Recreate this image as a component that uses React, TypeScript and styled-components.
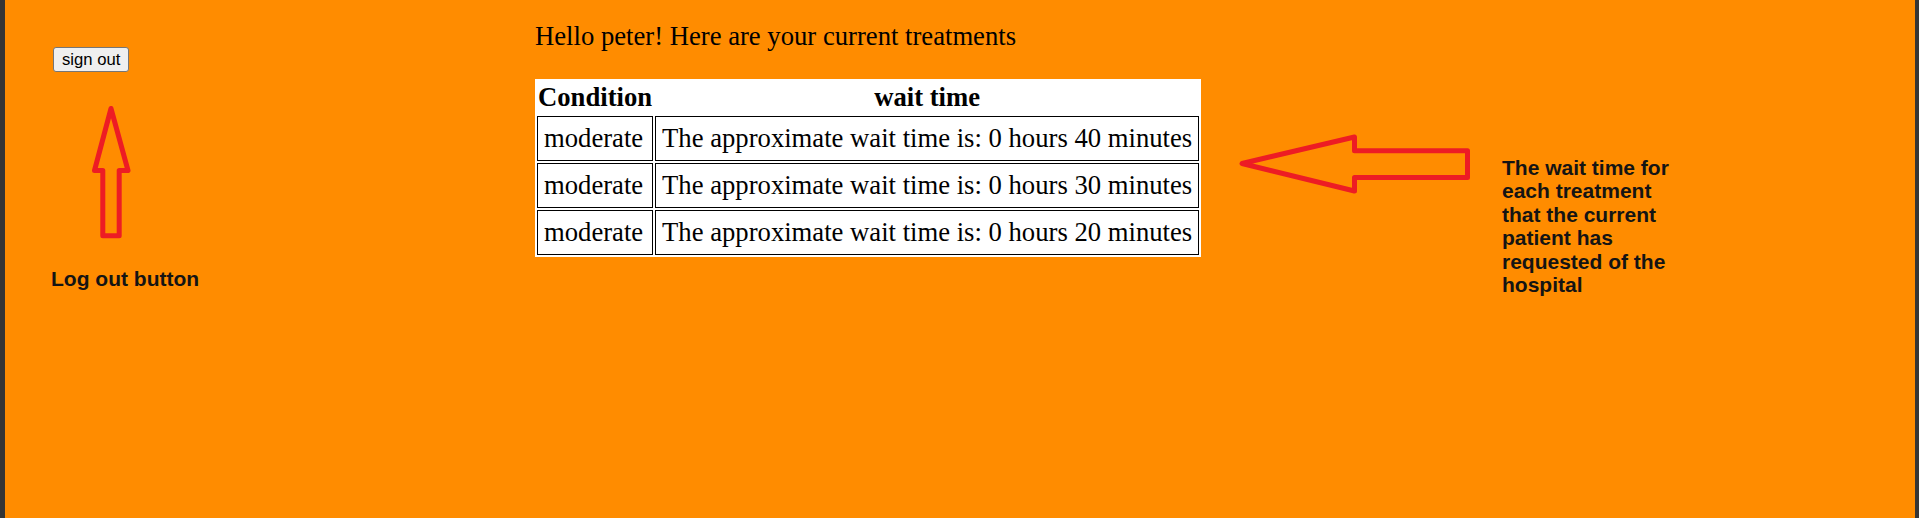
import React from 'react';
import styled, { createGlobalStyle } from 'styled-components';

const GlobalStyle = createGlobalStyle`
  html, body {
    margin: 0;
    padding: 0;
  }
  body {
    font-family: "Liberation Serif", "Times New Roman", serif;
  }
`;

const Frame = styled.div`
  display: flex;
  align-items: flex-start;
  height: 100vh;
  box-sizing: border-box;
  background: #ff8c00;
  border-left: 5px solid #353535;
  border-right: 4px solid #353535;
  overflow: hidden;
`;

const SideCol = styled.div`
  width: 530px;
  flex-shrink: 0;
  box-sizing: border-box;
  padding: 47px 0 0 48px;
  display: flex;
  flex-direction: column;
  align-items: flex-start;
`;

const SignOut = styled.button`
  font-family: "Liberation Sans", Arial, sans-serif;
  font-size: 16.67px;
  line-height: 19px;
  color: #000;
  background: #efefef;
  border: 1px solid #767676;
  border-radius: 3px;
  padding: 2px 8px;
  margin: 0;
  cursor: pointer;
`;

const Note = styled.div<{ $width?: number }>`
  font-family: "Liberation Sans", Arial, sans-serif;
  font-weight: bold;
  font-size: 21px;
  line-height: 23.4px;
  color: #141414;
  ${(p) => p.$width && `width: ${p.$width}px;`}
`;

const MainCol = styled.div`
  width: 700px;
  flex-shrink: 0;
  padding-top: 21px;
`;

const Greeting = styled.div`
  font-size: 26.67px;
  line-height: normal;
  color: #000;
`;

const Treatments = styled.table`
  margin-top: 27px;
  background: #fff;
  border-collapse: separate;
  border-spacing: 2.5px;
  font-size: 26.67px;
  color: #000;

  th {
    font-weight: bold;
    padding: 1px;
    text-align: center;
  }

  td {
    border: 1px solid #000;
    padding: 6px;
    text-align: left;
  }
`;

const Pointer = styled.svg<{ $top: number; $left?: number }>`
  display: block;
  flex-shrink: 0;
  margin-top: ${(p) => p.$top}px;
  margin-left: ${(p) => p.$left ?? 0}px;
  overflow: visible;
`;

const rows = [
  { condition: 'moderate', hours: 0, minutes: 40 },
  { condition: 'moderate', hours: 0, minutes: 30 },
  { condition: 'moderate', hours: 0, minutes: 20 },
];

const UpArrow = () => (
  <Pointer $top={32} $left={37} width="44" height="136" viewBox="0 0 44 136">
    <polygon
      points="21,4.5 38,66.5 29.2,66.5 29.2,131.8 12.8,131.8 12.8,66.5 4.5,66.5"
      fill="none"
      stroke="#ed1c24"
      strokeWidth="5"
      strokeLinejoin="round"
    />
  </Pointer>
);

const LeftArrow = () => (
  <Pointer $top={130} width="240" height="66" viewBox="0 0 240 66">
    <polygon
      points="7,33.5 119.5,7 119.5,20.8 232.5,20.8 232.5,47.5 119.5,47.5 119.5,61"
      fill="none"
      stroke="#ed1c24"
      strokeWidth="5"
      strokeLinejoin="round"
    />
  </Pointer>
);

export default function App() {
  return (
    <>
      <GlobalStyle />
      <Frame>
        <SideCol>
          <SignOut>sign out</SignOut>
          <UpArrow />
          <Note style={{ marginTop: 27, marginLeft: -2 }}>Log out button</Note>
        </SideCol>

        <MainCol>
          <Greeting>Hello peter! Here are your current treatments</Greeting>
          <Treatments>
            <thead>
              <tr>
                <th>Condition</th>
                <th>wait time</th>
              </tr>
            </thead>
            <tbody>
              {rows.map((r, i) => (
                <tr key={i}>
                  <td>{r.condition}</td>
                  <td>
                    The approximate wait time is: {r.hours} hours {r.minutes} minutes
                  </td>
                </tr>
              ))}
            </tbody>
          </Treatments>
        </MainCol>

        <LeftArrow />
        <Note $width={178} style={{ marginTop: 156, marginLeft: 27 }}>
          The wait time for each treatment that the current patient has requested of the hospital
        </Note>
      </Frame>
    </>
  );
}
